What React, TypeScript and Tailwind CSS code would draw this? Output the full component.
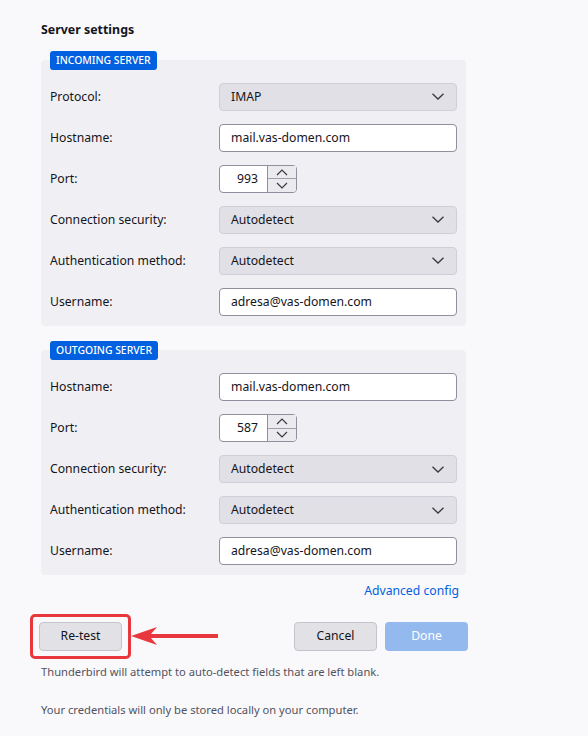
const FONT = { fontFamily: '"Noto Sans", "Open Sans", sans-serif' };

function Chevron() {
  return (
    <svg width="12" height="7" viewBox="0 0 12 7" fill="none">
      <path d="M0.5 0.8 L6 6 L11.5 0.8" stroke="#3a3a3a" strokeWidth="1.3" />
    </svg>
  );
}

function Select({ value }: { value: string }) {
  return (
    <div className="flex h-[28px] w-[238px] items-center justify-between rounded-[4px] border border-[#cfcfd8] bg-[#e0e0e6] pl-[11px] pr-[12px] text-[12.2px] text-[#15141a]">
      <span>{value}</span>
      <Chevron />
    </div>
  );
}

function TextInput({ value }: { value: string }) {
  return (
    <div className="flex h-[28px] w-[238px] items-center rounded-[4px] border border-[#8f8f9d] bg-white pl-[11px] text-[12.2px] text-[#15141a]">
      {value}
    </div>
  );
}

function PortInput({ value }: { value: string }) {
  return (
    <div className="flex h-[28px] w-[78px] items-stretch rounded-[4px] border border-[#8f8f9d] bg-white">
      <div className="flex flex-1 items-center justify-end pr-[9px] text-[12.2px] text-[#15141a]">
        {value}
      </div>
      <div className="flex w-[29px] flex-col border-l border-[#8f8f9d]">
        <div className="flex flex-1 items-center justify-center border-b border-[#a0a0a8] bg-[#ebebef]">
          <svg width="12" height="7" viewBox="0 0 12 7" fill="none">
            <path d="M1 6 L6 1 L11 6" stroke="#3a3a3a" strokeWidth="1.2" />
          </svg>
        </div>
        <div className="flex flex-1 items-center justify-center rounded-br-[3px] bg-[#ebebef]">
          <svg width="12" height="7" viewBox="0 0 12 7" fill="none">
            <path d="M1 1 L6 6 L11 1" stroke="#3a3a3a" strokeWidth="1.2" />
          </svg>
        </div>
      </div>
    </div>
  );
}

function Row({ label, children }: { label: string; children: React.ReactNode }) {
  return (
    <div className="flex items-center">
      <div className="w-[169px] text-[12.2px] text-[#15141a]">{label}</div>
      {children}
    </div>
  );
}

function Group({ title, children, className }: { title: string; children: React.ReactNode; className?: string }) {
  return (
    <div className={className}>
      <div className="relative z-10 ml-[9px] inline-flex h-[19px] items-center rounded-[3px] bg-[#0060df] px-[6px] text-[10.4px] font-medium text-white">
        {title}
      </div>
      <div className="-mt-[10px] flex flex-col gap-[13px] rounded-[4px] bg-[#f0f0f4] px-[9px] pb-[10px] pt-[23px]">
        {children}
      </div>
    </div>
  );
}

export default function App() {
  return (
    <div className="h-[736px] w-[588px] overflow-hidden bg-[#f9f9fb]" style={FONT}>
      <div className="ml-[41px] w-[425px] pt-[21px]">
        <h1 className="text-[12.4px] font-bold text-[#15141a]">Server settings</h1>

        <Group title="INCOMING SERVER" className="mt-[6px]">
          <Row label="Protocol:">
            <Select value="IMAP" />
          </Row>
          <Row label="Hostname:">
            <TextInput value="mail.vas-domen.com" />
          </Row>
          <Row label="Port:">
            <PortInput value="993" />
          </Row>
          <Row label="Connection security:">
            <Select value="Autodetect" />
          </Row>
          <Row label="Authentication method:">
            <Select value="Autodetect" />
          </Row>
          <Row label="Username:">
            <TextInput value="adresa@vas-domen.com" />
          </Row>
        </Group>

        <Group title="OUTGOING SERVER" className="mt-[10px]">
          <Row label="Hostname:">
            <TextInput value="mail.vas-domen.com" />
          </Row>
          <Row label="Port:">
            <PortInput value="587" />
          </Row>
          <Row label="Connection security:">
            <Select value="Autodetect" />
          </Row>
          <Row label="Authentication method:">
            <Select value="Autodetect" />
          </Row>
          <Row label="Username:">
            <TextInput value="adresa@vas-domen.com" />
          </Row>
        </Group>

        <div className="mr-[7px] mt-[7px] flex justify-end">
          <a className="text-[12.2px] text-[#0060df]">Advanced config</a>
        </div>

        <div className="-ml-[11px] -mr-[2px] mt-[13px] flex items-center">
          <div className="rounded-[5px] border-[3px] border-[#e8383d] px-[6px] py-[5px]">
            <button className="flex h-[29px] w-[83px] items-center justify-center rounded-[4px] border border-[#c4c4cc] bg-[#e2e2e6] text-[12.2px] text-[#15141a]">
              Re-test
            </button>
          </div>
          <svg width="88" height="20" viewBox="0 0 88 20">
            <path d="M0 10 L26 1 L20 8 L87 8 L87 12 L20 12 L26 19 Z" fill="#e8383d" />
          </svg>
          <div className="flex-1" />
          <button className="flex h-[29px] w-[83px] items-center justify-center rounded-[4px] border border-[#c4c4cc] bg-[#e2e2e6] text-[12.2px] text-[#15141a]">
            Cancel
          </button>
          <button className="ml-[8px] flex h-[29px] w-[83px] items-center justify-center rounded-[4px] bg-[#94b9ee] text-[12.2px] text-white">
            Done
          </button>
        </div>

        <p className="mt-[5px] text-[11.2px] text-[#52525e]">
          Thunderbird will attempt to auto-detect fields that are left blank.
        </p>
        <p className="mt-[22px] text-[11.2px] text-[#52525e]">
          Your credentials will only be stored locally on your computer.
        </p>
      </div>
    </div>
  );
}
